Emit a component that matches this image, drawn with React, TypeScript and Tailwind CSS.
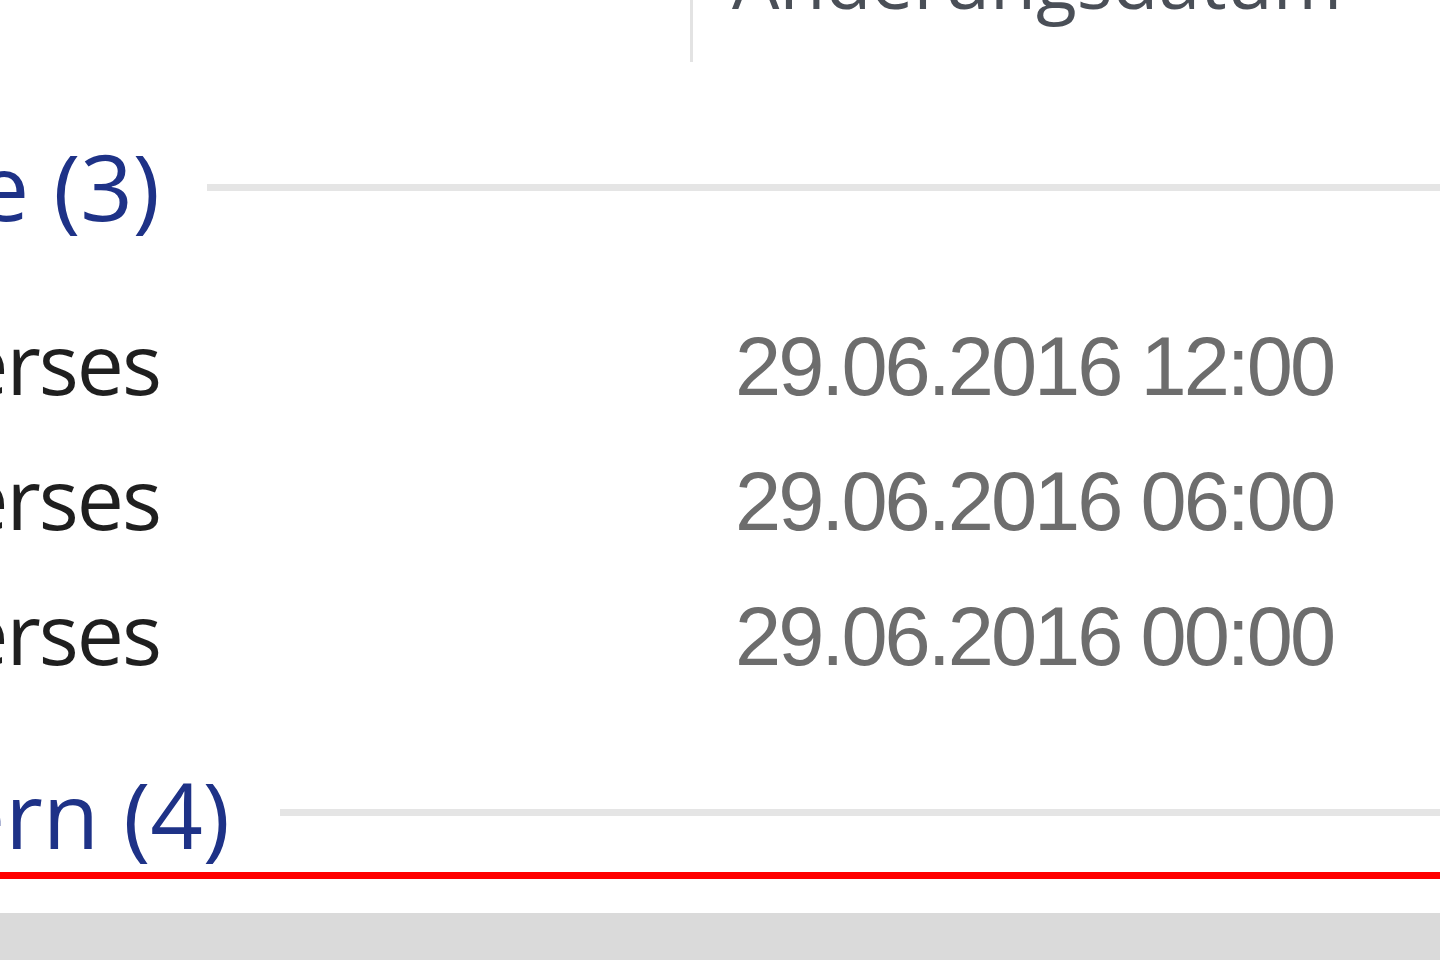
import React from "react";

const sans = "font-['Open_Sans','Noto_Sans',sans-serif]";
const arial = "font-['Liberation_Sans',Arial,sans-serif]";

function GroupHeader({ label, cellW, gap, lineTop }: { label: string; cellW: string; gap: string; lineTop: string }) {
  return (
    <div className="flex items-start">
      <div className={`${cellW} shrink-0 flex justify-end`}>
        <span className={`${sans} shrink-0 whitespace-nowrap text-[92px] leading-none text-[#1e3287]`}>{label}</span>
      </div>
      <div className={`${gap} ${lineTop} flex-1 h-[7px] bg-[#e5e5e5]`} />
    </div>
  );
}

function Row({ name, date }: { name: string; date: string }) {
  return (
    <div className="flex items-baseline h-[135px]">
      <div className="w-[693px] shrink-0">
        <div className="w-[160px] flex justify-end">
          <span className={`${sans} shrink-0 whitespace-nowrap text-[84px] leading-[135px] tracking-[-2px] text-[#1f1f1f]`}>{name}</span>
        </div>
      </div>
      <span className={`${arial} pl-[42px] whitespace-nowrap text-[83px] leading-[135px] tracking-[-3px] text-[#6d6d6d]`}>{date}</span>
    </div>
  );
}

export default function App() {
  return (
    <div className="relative w-[1440px] h-[960px] overflow-hidden bg-white flex flex-col">
      {/* column header */}
      <div className="flex h-[62px] shrink-0">
        <div className="w-[690px] shrink-0" />
        <div className="w-[3px] bg-[#e3e3e3]" />
        <div className={`${sans} pl-[39px] -mt-[57px] text-[75px] leading-none text-[#4a4f57] whitespace-nowrap`}>
          Änderungsdatum
        </div>
      </div>

      <div className="mt-[78px]">
        <GroupHeader label="Heute (3)" cellW="w-[160px]" gap="ml-[47px]" lineTop="mt-[44px]" />
      </div>

      <div className="mt-[63px] flex flex-col">
        <Row name="Diverses" date="29.06.2016 12:00" />
        <Row name="Diverses" date="29.06.2016 06:00" />
        <Row name="Diverses" date="29.06.2016 00:00" />
      </div>

      <div className="mt-[68px]">
        <GroupHeader label="Gestern (4)" cellW="w-[230px]" gap="ml-[50px]" lineTop="mt-[41px]" />
      </div>

      <div className="mt-[12px] h-[7px] bg-[#ff0000] shrink-0" />
      <div className="mt-[34px] flex-1 bg-[#dadada]" />
    </div>
  );
}
